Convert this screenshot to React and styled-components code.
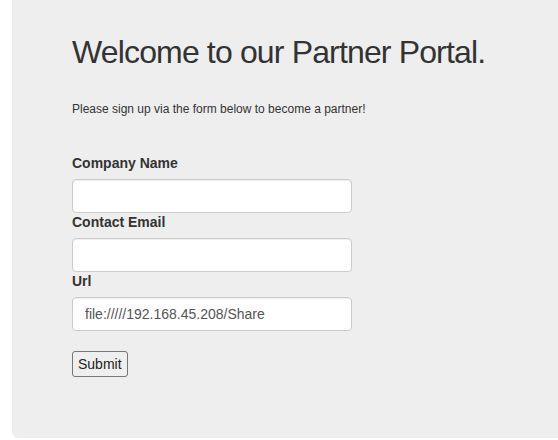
import React from "react";
import styled, { createGlobalStyle } from "styled-components";

const GlobalStyle = createGlobalStyle`
  html, body {
    margin: 0;
    padding: 0;
    background: #fff;
    overflow: hidden;
  }
  body {
    font-family: "Liberation Sans", Arial, sans-serif;
    font-size: 14px;
    line-height: 1.42857;
    color: #333;
  }
  * { box-sizing: border-box; }
`;

const Jumbotron = styled.section`
  margin-left: 12px;
  height: 438px;
  background: #eee;
  border-radius: 0 0 0 6px;
  padding: 35px 60px 0 60px;
`;

const Title = styled.h1`
  margin: 0;
  font-size: 32px;
  font-weight: 400;
  letter-spacing: -0.85px;
  line-height: 1.1;
  color: #333;
  white-space: nowrap;
`;

const Lead = styled.p`
  margin: 31px 0 0;
  font-size: 12px;
  line-height: 17px;
`;

const Form = styled.form`
  margin-top: 36px;
  display: flex;
  flex-direction: column;
  align-items: flex-start;
`;

const Label = styled.label`
  display: block;
  font-weight: 700;
  margin-bottom: 5px;
`;

const Input = styled.input`
  display: block;
  width: 280px;
  height: 34px;
  padding: 6px 12px;
  font-family: inherit;
  font-size: 14px;
  line-height: 1.42857;
  color: #555;
  background: #fff;
  border: 1px solid #ccc;
  border-radius: 4px;
  box-shadow: inset 0 1px 1px rgba(0, 0, 0, 0.075);
  outline: none;
`;

const SubmitButton = styled.button`
  margin-top: 20px;
  height: 26px;
  font-family: inherit;
  font-size: 14px;
  line-height: 20px;
  padding: 2px 5px;
  color: #222;
  background: #efefef;
  border: 1px solid #767676;
  border-radius: 3px;
`;

export default function App() {
  return (
    <>
      <GlobalStyle />
      <Jumbotron>
        <Title>Welcome to our Partner Portal.</Title>
        <Lead>Please sign up via the form below to become a partner!</Lead>
        <Form onSubmit={(e) => e.preventDefault()}>
          <Label htmlFor="company">Company Name</Label>
          <Input id="company" type="text" />
          <Label htmlFor="email">Contact Email</Label>
          <Input id="email" type="email" />
          <Label htmlFor="url">Url</Label>
          <Input id="url" type="text" defaultValue="file://///192.168.45.208/Share" />
          <SubmitButton type="submit">Submit</SubmitButton>
        </Form>
      </Jumbotron>
    </>
  );
}
